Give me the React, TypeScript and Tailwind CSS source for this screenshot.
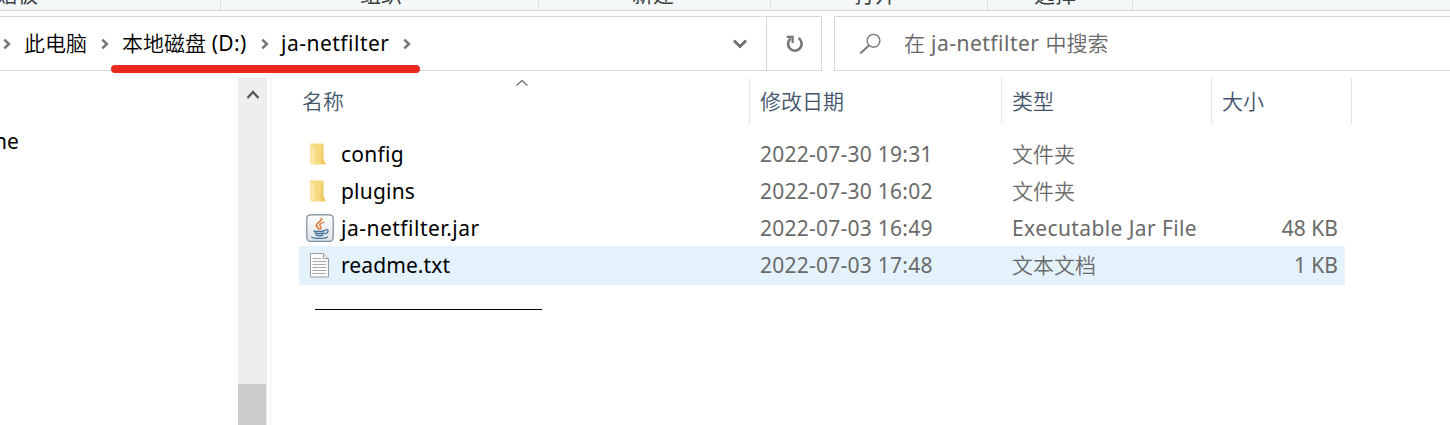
import React from "react";

type IconKind = "folder" | "jar" | "text";

interface FileEntry {
  name: string;
  nameClass: string;
  date: string;
  type: string;
  typeClass: string;
  size: string;
  icon: IconKind;
}

const files: FileEntry[] = [
  { name: "config", nameClass: "tracking-[0.25px]", date: "2022-07-30 19:31", type: "文件夹", typeClass: "font-[350]", size: "", icon: "folder" },
  { name: "plugins", nameClass: "tracking-[0.2px]", date: "2022-07-30 16:02", type: "文件夹", typeClass: "font-[350]", size: "", icon: "folder" },
  { name: "ja-netfilter.jar", nameClass: "tracking-[0.5px]", date: "2022-07-03 16:49", type: "Executable Jar File", typeClass: "tracking-[0.4px]", size: "48 KB", icon: "jar" },
  { name: "readme.txt", nameClass: "tracking-[0.1px]", date: "2022-07-03 17:48", type: "文本文档", typeClass: "font-[350]", size: "1 KB", icon: "text" },
];

function FolderIcon() {
  return (
    <svg width="28" height="30" viewBox="0 0 28 30">
      <path d="M4 3.5H17V20.5L19.5 24.5H9L4.5 24Z" fill="#f7d97f" />
      <path d="M4.5 4L9 8V25.5L4.5 23.5Z" fill="#fbe7a4" />
      <path d="M16 4.5H17.5V19L20 24H14.5Z" fill="#f0c964" />
    </svg>
  );
}

function JarIcon() {
  return (
    <svg width="28" height="30" viewBox="0 0 28 30">
      <defs>
        <linearGradient id="jarPlate" x1="0" y1="0" x2="0" y2="1">
          <stop offset="0" stopColor="#ffffff" />
          <stop offset="1" stopColor="#dce3e9" />
        </linearGradient>
      </defs>
      <rect x="0.8" y="0.8" width="26.4" height="26.6" rx="3.6" fill="url(#jarPlate)" stroke="#7d8b98" strokeWidth="1.2" />
      <g fill="none" strokeLinecap="round">
        <path d="M15.4 4.5C16 7.4 10.3 8.6 10.3 11.6C10.3 13.4 12.8 13.6 12.8 15.2" stroke="#d9793a" strokeWidth="1.7" />
        <path d="M18 8.2C14 9.4 12.8 10.9 14.3 12.3C15.3 13.4 15 14.4 14 15.2" stroke="#d9793a" strokeWidth="1.4" />
        <path d="M8 16.8C7.4 17.8 17 17.8 18.6 16.6M9 19C11 19.9 16 19.9 18 19M10 21.2C12 22 15.3 22 17 21.2" stroke="#49759b" strokeWidth="1.4" />
        <path d="M19.5 15.8C23.4 15 22.6 18.8 19.2 19.8M5.8 23.2C8 25 19 24.8 21.4 23" stroke="#49759b" strokeWidth="1.3" />
      </g>
    </svg>
  );
}

function TextIcon() {
  return (
    <svg width="28" height="30" viewBox="0 0 28 30">
      <path d="M4.5 2.5H17.5L22.5 7.5V26H4.5Z" fill="#fbfbfb" stroke="#9a9ea1" />
      <path d="M17.5 2.5V7.5H22.5" fill="#eef0f1" stroke="#9a9ea1" />
      <path d="M6.5 7.5H15M6.5 10.5H20.5M6.5 13.5H20.5M6.5 16.5H20.5M6.5 19.5H20.5M6.5 22.5H20.5" stroke="#a9adb0" />
    </svg>
  );
}

function FileIcon({ kind }: { kind: IconKind }) {
  if (kind === "folder") return <FolderIcon />;
  if (kind === "jar") return <JarIcon />;
  return <TextIcon />;
}

function Crumb() {
  return (
    <svg width="8" height="12" viewBox="0 0 8 12" className="shrink-0">
      <path d="M1.3 1.6L5.9 6L1.3 10.4" fill="none" stroke="#757575" strokeWidth="2.5" />
    </svg>
  );
}

function Ribbon() {
  const groups = [
    { label: "剪贴板", box: "w-[221px] pr-[182px] justify-end" },
    { label: "组织", box: "w-[318px] pl-[139px]" },
    { label: "新建", box: "w-[232px] pl-[93px]" },
    { label: "打开", box: "w-[217px] pl-[83px]" },
    { label: "选择", box: "w-[145px] pl-[46px]" },
  ];
  return (
    <div className="flex h-[11px] items-end overflow-hidden border-b border-[#d3d8da] bg-[#f5f8f8] text-[21px]">
      {groups.map((g) => (
        <div key={g.label} className={`flex h-[10px] shrink-0 items-end border-r border-[#dde1e3] ${g.box}`}>
          <span className="mb-[3px] shrink-0 whitespace-nowrap leading-[26px] text-[#3c4043]">{g.label}</span>
        </div>
      ))}
    </div>
  );
}

function AddressRow() {
  return (
    <div className="mt-[5px] flex h-[55px] text-[21px]">
      <div className="relative flex w-[822px] items-center border border-l-0 border-[#d5d9db]">
        <div className="flex flex-1 items-center whitespace-nowrap">
          <div className="flex w-6 pl-[3px]"><Crumb /></div>
          <div className="w-[77px] font-[350]">此电脑</div>
          <div className="flex w-[21px]"><Crumb /></div>
          <div className="w-[139px]"><span className="font-[350]">本地磁盘</span><span className="tracking-[0.3px]"> (D:)</span></div>
          <div className="flex w-5"><Crumb /></div>
          <div className="w-[122px] tracking-[0.5px]">ja-netfilter</div>
          <Crumb />
        </div>
        <svg width="16" height="12" viewBox="0 0 16 12" className="mr-[18px]">
          <path d="M2 2.5L8 8.5L14 2.5" fill="none" stroke="#707070" strokeWidth="2.8" />
        </svg>
        <div className="flex h-full w-[55px] items-center justify-center border-l border-[#d5d9db]">
          <svg width="20" height="20" viewBox="0 0 20 20">
            <path d="M14.6 4.2A6.8 6.8 0 1 1 6.6 4.6" fill="none" stroke="#757575" strokeWidth="2.6" />
            <path d="M2.8 2.9H8.6V9" fill="none" stroke="#757575" strokeWidth="2.2" />
          </svg>
        </div>
        <div className="absolute left-[111px] top-[48px] h-[8px] w-[309px] rounded-full bg-[#e8281d]" />
      </div>
      <div className="ml-3 flex flex-1 items-center whitespace-nowrap border border-r-0 border-[#d5d9db] text-[#686868]">
        <svg width="23" height="22" viewBox="0 0 23 22" className="ml-[24px] mr-[22px]">
          <circle cx="14.5" cy="7.8" r="6.4" fill="none" stroke="#777" strokeWidth="1.4" />
          <path d="M9.9 12.5L1.2 20.5" stroke="#777" strokeWidth="1.8" />
        </svg>
        <span className="font-[350]">在</span>
        <span className="whitespace-pre tracking-[0.5px]"> ja-netfilter </span>
        <span className="font-[350]">中搜索</span>
      </div>
    </div>
  );
}

function Header() {
  return (
    <div className="relative flex h-[46px] items-center text-[21px] font-[350] text-[#43556b]">
      <div className="h-full w-[478px] border-r border-[#e3e5e7] pl-[30px] leading-[46px]">名称</div>
      <div className="h-full w-[252px] border-r border-[#e3e5e7] pl-[10px] leading-[46px]">修改日期</div>
      <div className="h-full w-[210px] border-r border-[#e3e5e7] pl-[10px] leading-[46px]">类型</div>
      <div className="h-full w-[140px] border-r border-[#e3e5e7] pl-[10px] leading-[46px]">大小</div>
      <svg width="14" height="8" viewBox="0 0 14 8" className="absolute left-[243px] top-px">
        <path d="M1.5 6.5L7 1.5L12.5 6.5" fill="none" stroke="#666" strokeWidth="1.1" />
      </svg>
    </div>
  );
}

function Row({ file, selected }: { file: FileEntry; selected: boolean }) {
  return (
    <div className={`ml-[27px] flex w-[1046px] items-center whitespace-nowrap text-[21px] text-[#6a6a6a] ${selected ? "h-[39px] bg-[#e4f2fc]" : "h-[37px] pt-[2px]"}`}>
      <div className="ml-[7px] flex w-[35px]"><FileIcon kind={file.icon} /></div>
      <div className={`w-[419px] text-black ${file.nameClass}`}>{file.name}</div>
      <div className="w-[252px] tracking-[0.25px]">{file.date}</div>
      <div className={`w-[186px] ${file.typeClass}`}>{file.type}</div>
      <div className="flex-1 pr-[7px] text-right">{file.size}</div>
    </div>
  );
}

export default function App() {
  return (
    <div className="flex h-[425px] w-[1450px] flex-col overflow-hidden bg-white font-['Noto_Sans','Noto_Sans_CJK_SC',sans-serif] text-black">
      <Ribbon />
      <AddressRow />
      <div className="flex min-h-0 flex-1 pt-[7px]">
        <div className="w-[238px] overflow-hidden pt-[48px] text-[21px] leading-[30px]">
          <div className="-ml-[6px]">ne</div>
        </div>
        <div className="flex w-[29px] flex-col items-center bg-[#eeeeee]">
          <svg width="14" height="12" viewBox="0 0 14 12" className="mt-[11px]">
            <path d="M1.5 9L7 3L12.5 9" fill="none" stroke="#555" strokeWidth="2.3" />
          </svg>
          <div className="mt-[283px] w-full flex-1 border-r border-[#eeeeee] bg-[#cccccc]" />
        </div>
        <div className="ml-[3px] w-[2px] bg-[#f7f7f7]" />
        <div className="flex-1">
          <Header />
          <div className="pt-[11px]">
            {files.map((f) => (
              <Row key={f.name} file={f} selected={f.name === "readme.txt"} />
            ))}
          </div>
          <div className="ml-[43px] mt-[24px] h-px w-[227px] bg-black" />
        </div>
      </div>
    </div>
  );
}
